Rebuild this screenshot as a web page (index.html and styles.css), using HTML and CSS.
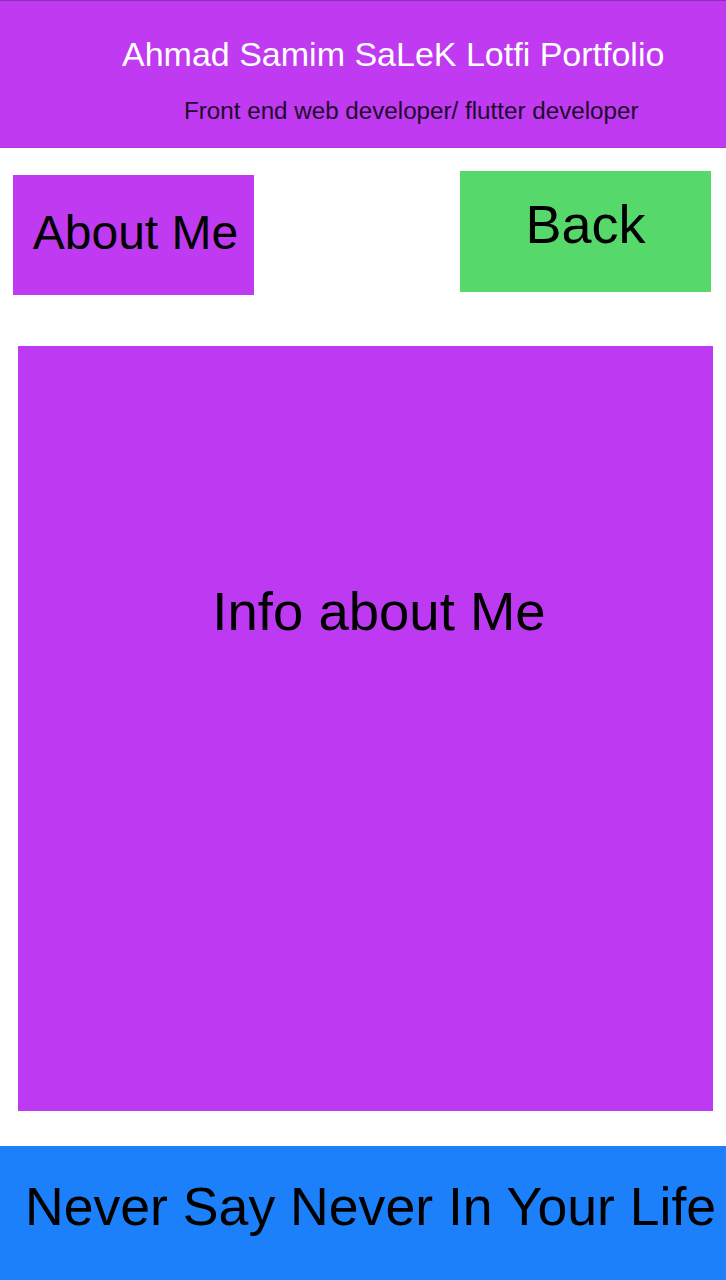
FILE: index.html
```html
<!DOCTYPE html>
<html lang="en">
<head>
<meta charset="utf-8">
<title>Ahmad Samim SaLeK Lotfi Portfolio</title>
<link rel="stylesheet" href="styles.css">
</head>
<body>
  <header class="header">
    <h1 class="title">Ahmad Samim SaLeK Lotfi Portfolio</h1>
    <p class="subtitle">Front end web developer/ flutter developer</p>
  </header>
  <div class="actions">
    <div class="about">About Me</div>
    <div class="back">Back</div>
  </div>
  <main class="info">Info about Me</main>
  <footer class="footer">Never Say Never In Your Life</footer>
</body>
</html>
```

FILE: styles.css
```css
* { box-sizing: border-box; }
html, body { margin: 0; padding: 0; }
body {
  width: 726px;
  height: 1280px;
  overflow: hidden;
  background: #ffffff;
  font-family: "Liberation Sans", Arial, sans-serif;
  color: #000;
  display: flex;
  flex-direction: column;
}
.header {
  height: 148px;
  background: #bf3af0;
  border-top: 1px solid #8f2cb8;
  border-bottom: 1px solid #b236e0;
  padding-top: 36px;
  display: flex;
  flex-direction: column;
  align-items: flex-start;
}
.title {
  margin: 0 0 0 122px;
  font-size: 34px;
  line-height: 34px;
  font-weight: normal;
  color: #ffffff;
  white-space: nowrap;
}
.subtitle {
  margin: 28px 0 0 184px;
  font-size: 24.2px;
  line-height: 24px;
  color: #1e0a2c;
  white-space: nowrap;
}
.actions {
  display: flex;
  justify-content: space-between;
  align-items: flex-start;
  padding: 0 15px 0 13px;
}
.about {
  margin-top: 27px;
  width: 241px;
  height: 120px;
  background: #bf3af0;
  padding: 34px 0 0 4px;
  font-size: 48px;
  line-height: 48px;
  text-align: center;
  white-space: nowrap;
}
.back {
  margin-top: 23px;
  width: 251px;
  height: 121px;
  background: #56d86b;
  padding-top: 26px;
  font-size: 54px;
  line-height: 54px;
  text-align: center;
  white-space: nowrap;
}
.info {
  margin: 51px 13px 0 18px;
  height: 765px;
  background: #be3af2;
  padding: 239px 0 0 27px;
  font-size: 54.5px;
  line-height: 54px;
  text-align: center;
  white-space: nowrap;
}
.footer {
  margin-top: 35px;
  height: 134px;
  background: #1b80f9;
  padding: 34px 0 0 25px;
  font-size: 53.6px;
  line-height: 53px;
  white-space: nowrap;
}
```
